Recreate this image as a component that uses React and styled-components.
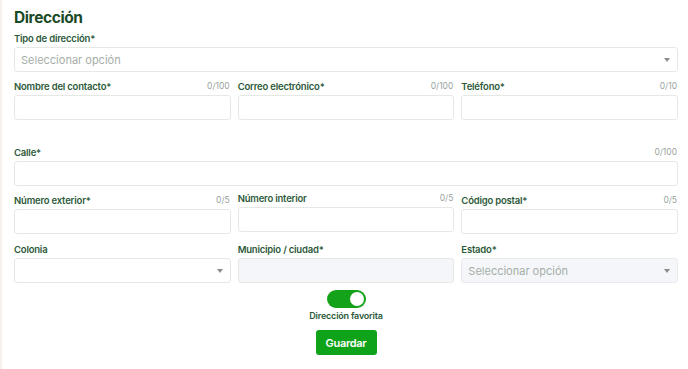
import { useState } from 'react';
import styled, { createGlobalStyle } from 'styled-components';

const GlobalStyle = createGlobalStyle`
  * { box-sizing: border-box; }
  body {
    margin: 0;
    background: #ffffff;
    font-family: Inter, "Noto Sans", sans-serif;
  }
`;

const Page = styled.div`
  width: 688px;
  height: 369px;
  border-left: 2px solid #f6f1ec;
  padding: 8px 10px 0 12px;
  background: #fff;
`;

const Title = styled.h2`
  margin: 0;
  font-size: 15.5px;
  line-height: 20px;
  font-weight: 700;
  letter-spacing: -0.4px;
  color: #1a4a28;
`;

const Grid = styled.div`
  display: grid;
  grid-template-columns: repeat(${p => p.$cols || 3}, 1fr);
  column-gap: 7px;
  margin-top: ${p => p.$top || 7}px;
`;

const Field = styled.div`
  display: flex;
  flex-direction: column;
  gap: 2px;
`;

const LabelRow = styled.div`
  display: flex;
  justify-content: space-between;
  align-items: center;
  height: 14px;
  margin-top: ${p => p.$shift || 0}px;
`;

const Label = styled.label`
  font-size: 9.5px;
  font-weight: 600;
  letter-spacing: -0.2px;
  color: #2d5a3a;
`;

const Counter = styled.span`
  font-size: 8.5px;
  color: #9aa39d;
  padding-right: 1px;
`;

const Input = styled.input`
  height: 25px;
  width: 100%;
  border: 1px solid #e6e8e6;
  border-radius: 3px;
  background: ${p => (p.disabled ? '#f4f6f9' : '#fff')};
  padding: 0 8px;
  font-family: inherit;
  font-size: 11px;
  outline: none;
`;

const SelectBox = styled.div`
  height: 25px;
  width: 100%;
  border: 1px solid ${p => (p.$disabled ? '#e8eaee' : '#e6e8e6')};
  border-radius: 3px;
  background: ${p => (p.$disabled ? '#f4f6f9' : '#fff')};
  padding: 0 7px 0 6px;
  display: flex;
  align-items: center;
  justify-content: space-between;
  font-size: 11px;
  color: #a5aea8;
`;

const Caret = styled.span`
  width: 0;
  height: 0;
  border-left: 3px solid transparent;
  border-right: 3px solid transparent;
  border-top: 4px solid #8a8f8c;
`;

const Footer = styled.div`
  display: flex;
  flex-direction: column;
  align-items: center;
  margin-top: 7px;
`;

const Toggle = styled.button`
  width: 39px;
  height: 18px;
  border-radius: 9px;
  border: none;
  padding: 2px;
  background: ${p => (p.$on ? '#14a21a' : '#cfd4d1')};
  display: flex;
  justify-content: ${p => (p.$on ? 'flex-end' : 'flex-start')};
  cursor: pointer;
`;

const Knob = styled.span`
  width: 14px;
  height: 14px;
  border-radius: 50%;
  background: #fff;
`;

const ToggleLabel = styled.span`
  margin-top: 2px;
  font-size: 9px;
  font-weight: 600;
  letter-spacing: -0.2px;
  color: #2d5a3a;
`;

const SaveButton = styled.button`
  margin-top: 9px;
  width: 61px;
  height: 25px;
  border: none;
  border-radius: 3px;
  background: #0fa31a;
  color: #fff;
  font-family: inherit;
  font-size: 11px;
  font-weight: 600;
  letter-spacing: -0.3px;
  cursor: pointer;
`;

function TextField({ label, required, max, disabled, shift }) {
  return (
    <Field>
      <LabelRow $shift={shift}>
        <Label>{label}{required && '*'}</Label>
        {max && <Counter>0/{max}</Counter>}
      </LabelRow>
      <Input disabled={disabled} />
    </Field>
  );
}

function SelectField({ label, required, placeholder, disabled }) {
  return (
    <Field>
      <LabelRow>
        <Label>{label}{required && '*'}</Label>
      </LabelRow>
      <SelectBox $disabled={disabled}>
        <span>{placeholder}</span>
        <Caret />
      </SelectBox>
    </Field>
  );
}

export default function App() {
  const [fav, setFav] = useState(true);
  return (
    <>
      <GlobalStyle />
      <Page>
        <Title>Dirección</Title>
        <Grid $cols={1} $top={3}>
          <SelectField label="Tipo de dirección" required placeholder="Seleccionar opción" />
        </Grid>
        <Grid>
          <TextField label="Nombre del contacto" required max={100} />
          <TextField label="Correo electrónico" required max={100} />
          <TextField label="Teléfono" required max={10} />
        </Grid>
        <Grid $cols={1} $top={25}>
          <TextField label="Calle" required max={100} />
        </Grid>
        <Grid>
          <TextField label="Número exterior" required max={5} />
          <TextField label="Número interior" max={5} shift={-2} />
          <TextField label="Código postal" required max={5} />
        </Grid>
        <Grid $top={8}>
          <SelectField label="Colonia" />
          <TextField label="Municipio / ciudad" required disabled />
          <SelectField label="Estado" required placeholder="Seleccionar opción" disabled />
        </Grid>
        <Footer>
          <Toggle $on={fav} onClick={() => setFav(!fav)}>
            <Knob />
          </Toggle>
          <ToggleLabel>Dirección favorita</ToggleLabel>
          <SaveButton>Guardar</SaveButton>
        </Footer>
      </Page>
    </>
  );
}
